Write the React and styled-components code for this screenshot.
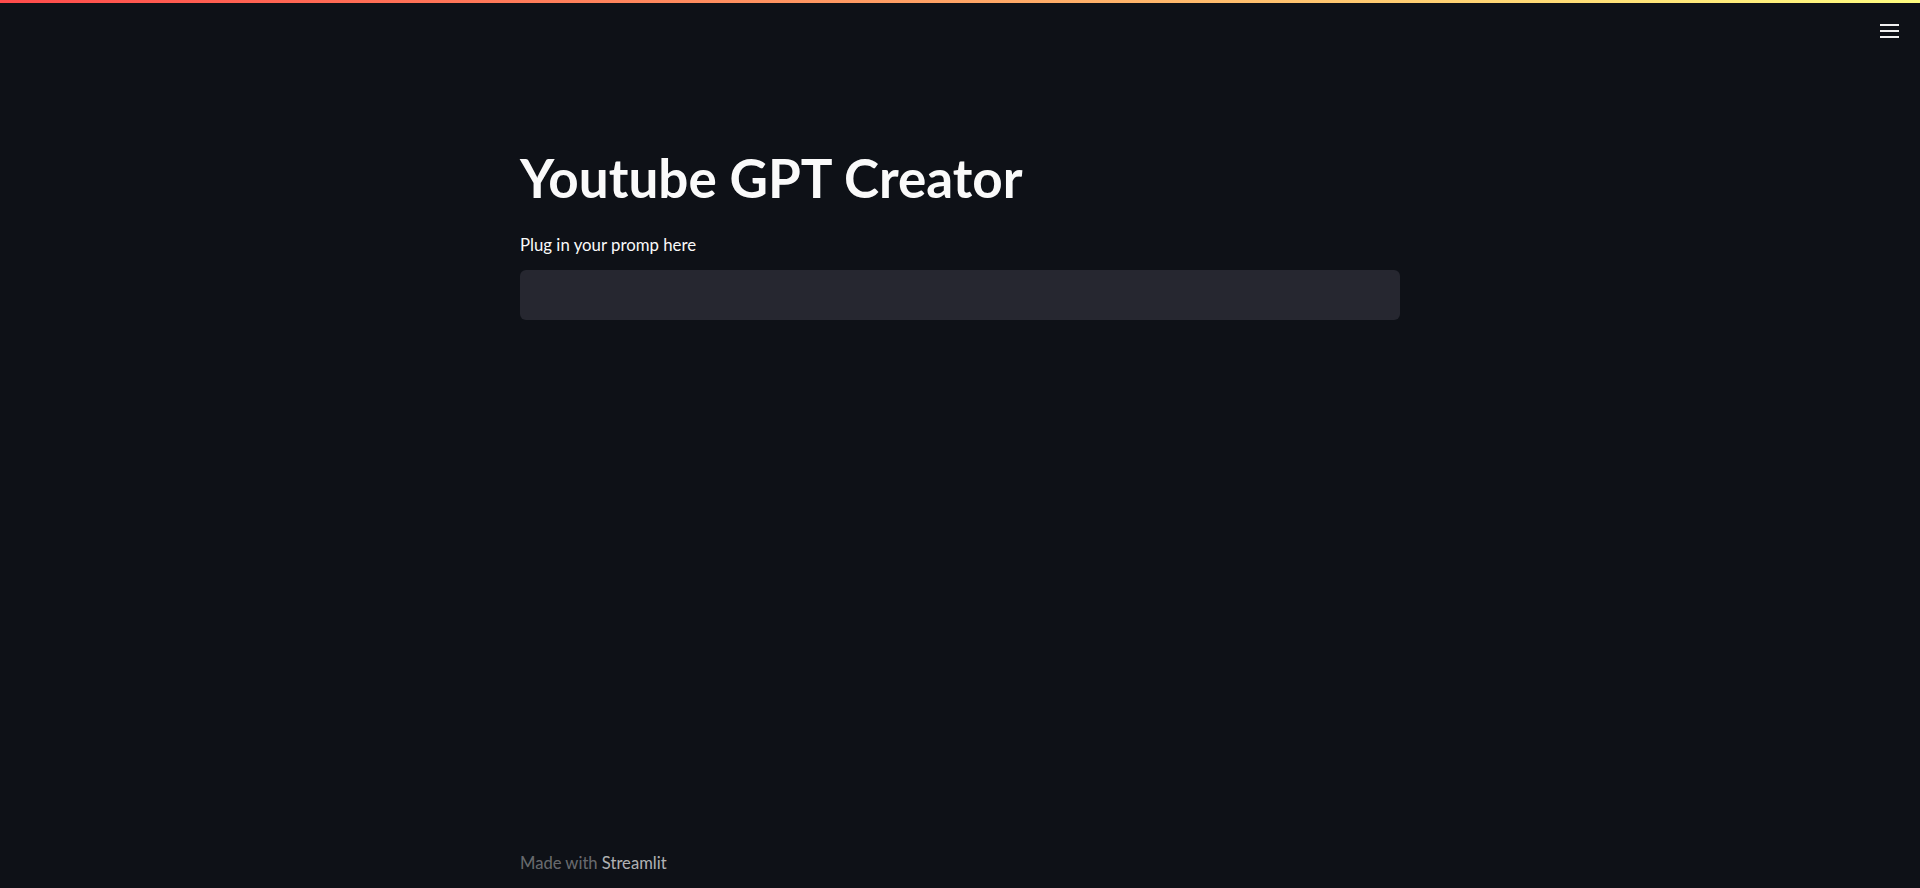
import styled, { createGlobalStyle } from "styled-components";

const GlobalStyle = createGlobalStyle`
  html, body {
    margin: 0;
    padding: 0;
    background-color: #0e1117;
  }

  * {
    box-sizing: border-box;
  }
`;

const Page = styled.div`
  position: relative;
  height: 100vh;
  background-color: #0e1117;
  color: #fafafa;
  font-family: Lato, "Noto Sans", sans-serif;
  display: flex;
  flex-direction: column;
  overflow: hidden;
`;

const Decoration = styled.div`
  height: 3px;
  background-image: linear-gradient(90deg, #ff4b4b, #fffd80);
`;

const Header = styled.header`
  position: absolute;
  top: 4px;
  right: 0;
  padding: 17px 20px;
`;

const MenuButton = styled.button`
  width: 20px;
  height: 20px;
  padding: 0;
  border: none;
  background: none;
  display: flex;
  flex-direction: column;
  justify-content: center;
  gap: 4px;
  cursor: pointer;

  span {
    display: block;
    height: 2px;
    width: 19px;
    background-color: #f0f0f0;
  }
`;

const Main = styled.main`
  flex: 1;
  width: 880px;
  margin: 0 auto;
  padding-top: 143px;
  display: flex;
  flex-direction: column;
`;

const Title = styled.h1`
  margin: 0;
  font-size: 53px;
  font-weight: 700;
  line-height: 1.2;
  color: #fafafa;
`;

const Label = styled.label`
  margin-top: 23px;
  font-size: 16.8px;
  line-height: 1.4;
  color: #fafafa;
`;

const Input = styled.input`
  margin-top: 14px;
  height: 50px;
  width: 100%;
  border: none;
  border-radius: 6px;
  background-color: #262730;
  color: #fafafa;
  padding: 0 16px;
  font-family: inherit;
  font-size: 17.5px;
  outline: none;
`;

const Footer = styled.footer`
  margin-top: auto;
  padding-bottom: 15px;
  font-size: 16.6px;
  color: rgba(250, 250, 250, 0.4);

  a {
    color: rgba(250, 250, 250, 0.7);
    text-decoration: none;
  }
`;

export default function App() {
  return (
    <>
      <GlobalStyle />
      <Page>
        <Decoration />
        <Header>
          <MenuButton aria-label="Main menu">
            <span />
            <span />
            <span />
          </MenuButton>
        </Header>
        <Main>
          <Title>Youtube GPT Creator</Title>
          <Label htmlFor="prompt">Plug in your promp here</Label>
          <Input id="prompt" type="text" />
          <Footer>
            Made with <a href="#">Streamlit</a>
          </Footer>
        </Main>
      </Page>
    </>
  );
}
